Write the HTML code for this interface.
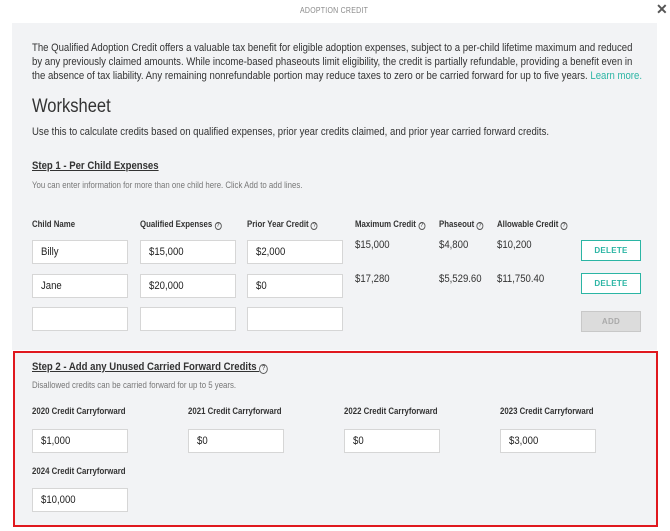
<!DOCTYPE html>
<html><head><style>
*{margin:0;padding:0;box-sizing:border-box}
body{width:670px;height:531px;background:#fff;font-family:"Liberation Sans",sans-serif;color:#333;position:relative;overflow:hidden}
.a{position:absolute;white-space:nowrap;transform:scaleX(.87);transform-origin:0 0}
.panel{position:absolute;left:12px;top:23px;width:645px;height:327px;background:#f2f3f5}
.red{position:absolute;left:13px;top:351px;width:645px;height:176px;background:#f2f3f5;border:2px solid #e0181e}
.in{position:absolute;width:96px;height:24px;background:#fff;border:1px solid #d6d6d6}
.in span{position:absolute;left:8px;top:5px;font-size:11px;color:#222;transform:scaleX(.87);transform-origin:0 0;white-space:nowrap}
.h{font-size:9px;font-weight:bold;color:#333}
.q{display:inline-block;width:8px;height:8px;border:1px solid #555;border-radius:50%;font-size:6px;line-height:6px;text-align:center;font-weight:normal;vertical-align:0px}
.v{font-size:11px;color:#333}
.btn{position:absolute;left:581px;width:60px;height:21px;border:1px solid #2bb5a4;background:#fff;color:#2bb5a4;font-size:8px;font-weight:bold;text-align:center;line-height:19px;letter-spacing:.3px}
</style></head><body>
<div class="a" style="left:300px;top:6px;font-size:8px;color:#888;letter-spacing:.3px">ADOPTION CREDIT</div>
<div style="position:absolute;left:656px;top:1px;font-size:14px;color:#555;font-weight:bold">✕</div>
<div class="panel"></div>
<div class="red"></div>
<div class="a" style="left:32px;top:41px;font-size:11px;line-height:14px;color:#333">The Qualified Adoption Credit offers a valuable tax benefit for eligible adoption expenses, subject to a per-child lifetime maximum and reduced<br>by any previously claimed amounts. While income-based phaseouts limit eligibility, the credit is partially refundable, providing a benefit even in<br>the absence of tax liability. Any remaining nonrefundable portion may reduce taxes to zero or be carried forward for up to five years. <span style="color:#2bb5a4">Learn more.</span></div>
<div class="a" style="left:32px;top:96px;font-size:19px;color:#333">Worksheet</div>
<div class="a" style="left:32px;top:126px;font-size:11px">Use this to calculate credits based on qualified expenses, prior year credits claimed, and prior year carried forward credits.</div>
<div class="a" style="left:32px;top:160px;font-size:11px;font-weight:bold;text-decoration:underline">Step 1 - Per Child Expenses</div>
<div class="a" style="left:32px;top:180px;font-size:9px;color:#777">You can enter information for more than one child here. Click Add to add lines.</div>
<div class="a h" style="left:32px;top:219px">Child Name</div>
<div class="a h" style="left:140px;top:219px">Qualified Expenses <span class="q">?</span></div>
<div class="a h" style="left:247px;top:219px">Prior Year Credit <span class="q">?</span></div>
<div class="a h" style="left:355px;top:219px">Maximum Credit <span class="q">?</span></div>
<div class="a h" style="left:439px;top:219px">Phaseout <span class="q">?</span></div>
<div class="a h" style="left:497px;top:219px">Allowable Credit <span class="q">?</span></div>
<div class="in" style="left:32px;top:240px"><span>Billy</span></div>
<div class="in" style="left:140px;top:240px"><span>$15,000</span></div>
<div class="in" style="left:247px;top:240px"><span>$2,000</span></div>
<div class="in" style="left:32px;top:274px"><span>Jane</span></div>
<div class="in" style="left:140px;top:274px"><span>$20,000</span></div>
<div class="in" style="left:247px;top:274px"><span>$0</span></div>
<div class="in" style="left:32px;top:307px"></div>
<div class="in" style="left:140px;top:307px"></div>
<div class="in" style="left:247px;top:307px"></div>
<div class="a v" style="left:355px;top:239px">$15,000</div>
<div class="a v" style="left:439px;top:239px">$4,800</div>
<div class="a v" style="left:497px;top:239px">$10,200</div>
<div class="a v" style="left:355px;top:273px">$17,280</div>
<div class="a v" style="left:439px;top:273px">$5,529.60</div>
<div class="a v" style="left:497px;top:273px">$11,750.40</div>
<div class="btn" style="top:240px">DELETE</div>
<div class="btn" style="top:273px">DELETE</div>
<div class="btn" style="top:311px;background:#dcdcdc;border-color:#c8c8c8;color:#aaa">ADD</div>
<div class="a" style="left:32px;top:361px;font-size:11px;font-weight:bold;text-decoration:underline">Step 2 - Add any Unused Carried Forward Credits <span class="q" style="width:10px;height:10px;font-size:7px;line-height:8px">?</span></div>
<div class="a" style="left:32px;top:380px;font-size:9px;color:#777">Disallowed credits can be carried forward for up to 5 years.</div>
<div class="a h" style="left:32px;top:406px">2020 Credit Carryforward</div>
<div class="a h" style="left:188px;top:406px">2021 Credit Carryforward</div>
<div class="a h" style="left:344px;top:406px">2022 Credit Carryforward</div>
<div class="a h" style="left:500px;top:406px">2023 Credit Carryforward</div>
<div class="in" style="left:32px;top:429px"><span>$1,000</span></div>
<div class="in" style="left:188px;top:429px"><span>$0</span></div>
<div class="in" style="left:344px;top:429px"><span>$0</span></div>
<div class="in" style="left:500px;top:429px"><span>$3,000</span></div>
<div class="a h" style="left:32px;top:466px">2024 Credit Carryforward</div>
<div class="in" style="left:32px;top:488px"><span>$10,000</span></div>
</body></html>
